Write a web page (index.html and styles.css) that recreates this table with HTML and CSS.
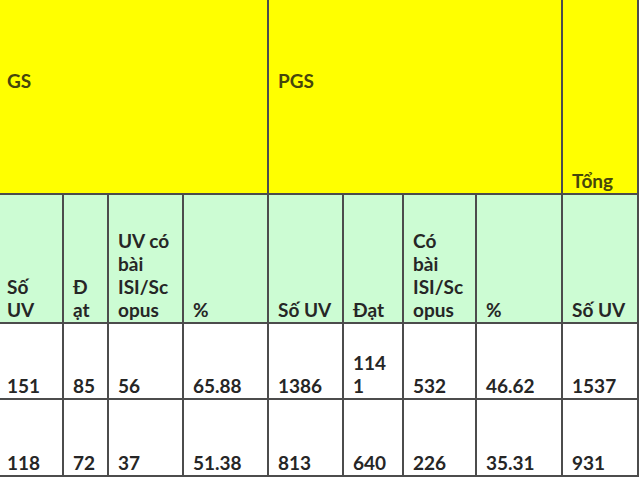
FILE: index.html
```html
<!DOCTYPE html>
<html lang="vi">
<head>
<meta charset="utf-8">
<title>Bảng thống kê GS PGS</title>
<link rel="stylesheet" href="styles.css">
</head>
<body>
<table class="grid">
  <colgroup>
    <col class="c1"><col class="c2"><col class="c3"><col class="c4">
    <col class="c5"><col class="c6"><col class="c7"><col class="c8"><col class="c9">
  </colgroup>
  <tr class="row-top">
    <td colspan="4" class="yellow group">GS</td>
    <td colspan="4" class="yellow group">PGS</td>
    <td class="yellow">Tổng</td>
  </tr>
  <tr class="row-head">
    <td class="green">Số<br>UV</td>
    <td class="green">Đ<br>ạt</td>
    <td class="green">UV có<br>bài<br>ISI/Sc<br>opus</td>
    <td class="green">%</td>
    <td class="green">Số UV</td>
    <td class="green">Đạt</td>
    <td class="green">Có<br>bài<br>ISI/Sc<br>opus</td>
    <td class="green">%</td>
    <td class="green">Số UV</td>
  </tr>
  <tr class="row-data">
    <td>151</td><td>85</td><td>56</td><td>65.88</td>
    <td>1386</td><td>114<br>1</td><td>532</td><td>46.62</td><td>1537</td>
  </tr>
  <tr class="row-data2">
    <td>118</td><td>72</td><td>37</td><td>51.38</td>
    <td>813</td><td>640</td><td>226</td><td>35.31</td><td>931</td>
  </tr>
</table>
</body>
</html>
```
FILE: styles.css
```css
html, body {
  margin: 0;
  padding: 0;
  background: #ffffff;
  overflow: hidden;
}
.grid {
  border-collapse: collapse;
  table-layout: fixed;
  width: 641px;
  margin-left: -4px;
  margin-top: -10px;
  font-family: Lato, "Open Sans", "Liberation Sans", sans-serif;
  font-weight: 700;
  font-size: 19px;
  line-height: 23px;
  color: #262626;
}
.c1 { width: 66px; }
.c2 { width: 45px; }
.c3 { width: 75px; }
.c4 { width: 85px; }
.c5 { width: 75px; }
.c6 { width: 60px; }
.c7 { width: 73px; }
.c8 { width: 86px; }
.c9 { width: 76px; }
.grid td {
  border: 2px solid #4c4c4c;
  padding: 0 0 1px 9px;
  vertical-align: bottom;
  text-align: left;
  white-space: nowrap;
  overflow: hidden;
}
.row-top td { height: 200px; }
.row-head td { height: 126px; }
.row-data td { height: 73px; }
.row-data2 td { height: 74px; }
.yellow {
  background: #ffff00;
  color: #46460c;
}
.row-top .yellow.group {
  height: 100px;
  padding-bottom: 101px;
}
.green {
  background: #ccfcd3;
}
```
